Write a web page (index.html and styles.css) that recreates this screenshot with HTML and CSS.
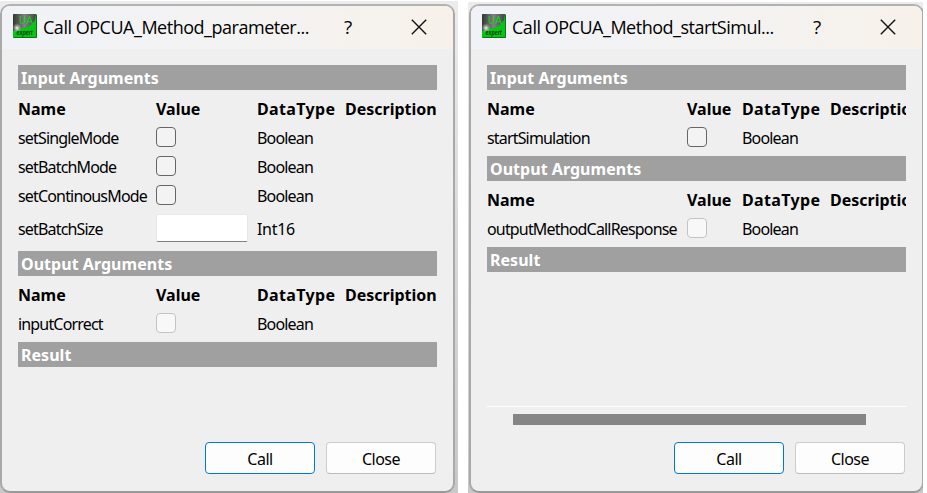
FILE: index.html
```html
<!DOCTYPE html>
<html lang="en">
<head>
<meta charset="utf-8">
<title>Call OPCUA Method</title>
<link rel="stylesheet" href="styles.css">
</head>
<body>
<svg width="0" height="0" class="defs">
  <defs>
    <linearGradient id="g" x1="0" y1="0" x2="1" y2="0"><stop offset="0" stop-color="#303830"/><stop offset=".5" stop-color="#808080"/><stop offset="1" stop-color="#454545"/></linearGradient>
    <radialGradient id="r"><stop offset="0" stop-color="#fff"/><stop offset="1" stop-color="#999" stop-opacity="0"/></radialGradient>
    <symbol id="logo" viewBox="0 0 24 24">
      <rect width="24" height="24" rx="1" fill="#08c414"/>
      <path d="M0 1Q0 0 1 0H23L22 6Q18 13 10 14L0 17Z" fill="url(#g)"/>
      <circle cx="4" cy="14" r="5" fill="url(#r)"/>
      <text x="6" y="10" class="logo-ua">UA</text>
      <text x="3.5" y="20.500" class="logo-ex" textLength="16" lengthAdjust="spacingAndGlyphs">expert</text>
      <path d="M.5 23.500H23.500V1" fill="none" stroke="#087a10"/>
    </symbol>
  </defs>
</svg>
<main class="stage">
  <div class="backdrop first">
    <section class="window">
      <header class="titlebar">
        <svg class="logo"><use href="#logo"/></svg>
        <h1>Call OPCUA_Method_parameter...</h1>
        <span class="help">?</span>
        <svg class="x" viewBox="0 0 16 16"><path d="M.8.8 15.200 15.200M15.200.8.8 15.200"/></svg>
      </header>
      <div class="content">
        <h2 class="bar">Input Arguments</h2>
        <div class="row head"><b>Name</b><b>Value</b><b class="type">DataType</b><b>Description</b></div>
        <div class="row"><span>setSingleMode</span><i class="check"></i><span>Boolean</span></div>
        <div class="row"><span>setBatchMode</span><i class="check"></i><span>Boolean</span></div>
        <div class="row"><span>setContinousMode</span><i class="check"></i><span>Boolean</span></div>
        <div class="row tall"><span>setBatchSize</span><i class="field"></i><span class="int">Int16</span></div>
        <h2 class="bar">Output Arguments</h2>
        <div class="row head"><b>Name</b><b>Value</b><b class="type">DataType</b><b>Description</b></div>
        <div class="row"><span>inputCorrect</span><i class="check off"></i><span>Boolean</span></div>
        <h2 class="bar">Result</h2>
      </div>
      <footer class="actions"><button class="btn primary">Call</button><button class="btn">Close</button></footer>
    </section>
  </div>
  <div class="backdrop second">
    <section class="window">
      <header class="titlebar">
        <svg class="logo"><use href="#logo"/></svg>
        <h1>Call OPCUA_Method_startSimul...</h1>
        <span class="help">?</span>
        <svg class="x" viewBox="0 0 16 16"><path d="M.8.8 15.200 15.200M15.200.8.8 15.200"/></svg>
      </header>
      <div class="content">
        <h2 class="bar">Input Arguments</h2>
        <div class="row head"><b>Name</b><b>Value</b><b class="type">DataType</b><b>Description</b></div>
        <div class="row"><span>startSimulation</span><i class="check"></i><span>Boolean</span></div>
        <h2 class="bar">Output Arguments</h2>
        <div class="row head"><b>Name</b><b>Value</b><b class="type">DataType</b><b>Description</b></div>
        <div class="row"><span>outputMethodCallResponse</span><i class="check off"></i><span>Boolean</span></div>
        <h2 class="bar">Result</h2>
        <div class="scroll"><div class="thumb"></div></div>
      </div>
      <footer class="actions"><button class="btn primary">Call</button><button class="btn">Close</button></footer>
    </section>
  </div>
</main>
</body>
</html>
```
FILE: styles.css
```css
* { box-sizing: border-box; }
body { margin: 0; background: #fff; color: #000; font: 16px/20px "Noto Sans", sans-serif; overflow: hidden; }
.defs { display: block; }
.stage { display: flex; gap: 10px; height: 493px; }
.backdrop { background: linear-gradient(#ececec, #e0e0e0 30%, #c8c8c8); overflow: hidden; }
.first { width: 458px; margin-top: 1px; padding-top: 3px; }
.second { width: 455px; margin-top: 2px; padding: 2px 0 0 1px; }
.window { width: 455px; height: 489px; border: 2px solid; border-color: #b2b2b2 #a9a9a9 #999 #a9a9a9; border-radius: 10px; background: #efefef; overflow: hidden; display: flex; flex-direction: column; }
.titlebar { height: 43px; flex: none; padding: 0 26px 0 11px; display: flex; align-items: center; background: linear-gradient(90deg, #f1f2f7, #f3f3f3 50%, #f7f1ea); }
.logo { width: 24px; height: 24px; margin-top: -3px; }
.logo-ua { font: 10px "Liberation Sans", sans-serif; fill: #10d020; }
.logo-ex { font: italic bold 7px "Liberation Sans", sans-serif; fill: #043c08; }
h1 { margin: -2px 0 0 6px; font: 18px/24px "Open Sans", sans-serif; white-space: nowrap; width: 267px; letter-spacing: -.48px; }
.help { width: 70px; padding-left: 34px; font: 19px/24px "Open Sans", sans-serif; margin-top: -2px; }
.x { width: 16px; height: 16px; margin: -2px 0 0 auto; fill: none; stroke: #111; stroke-width: 1.400; }
.content { flex: 1; width: 419px; margin: 16px 0 0 16px; overflow: hidden; display: flex; flex-direction: column; }
.bar { flex: none; margin: 0; height: 25px; padding: 1px 0 0 3px; background: #a0a0a0; color: #fff; font-size: 16px; font-weight: 700; line-height: 25px; letter-spacing: .03px; }
.row { flex: none; display: grid; grid-template-columns: 138px 101px 88px 110px; height: 29px; line-height: 22px; white-space: nowrap; letter-spacing: -.83px; }
.second .row { grid-template-columns: 200px 55px 88px 110px; }
.head, .second .head { height: 37px; line-height: 38px; letter-spacing: 0; }
.type { letter-spacing: .35px; }
.int { letter-spacing: -.3px; }
.tall { height: 37px; line-height: 30px; }
.check { width: 20px; height: 20px; border: 1px solid #666; border-radius: 4px; background: #f3f3f3; }
.off { border-color: #c3c3c3; background: #f8f8f8; }
.field { width: 92px; height: 28px; background: #fff; border: 1px solid #e8e8e8; border-bottom-color: #808080; border-radius: 2px; }
.scroll { flex: none; margin-top: auto; height: 20px; border-top: 1px solid #fff; padding: 7px 40px 0 26px; }
.thumb { height: 11px; background: #858585; }
.actions { flex: none; display: flex; justify-content: flex-end; gap: 11px; height: 65px; padding: 16px 17px 0 0; }
.btn { width: 110px; height: 32px; padding: 2px 0 0; border: 1px solid #ccc; border-bottom-color: #bbb; border-radius: 4px; background: #fdfdfd; font: inherit; color: #000; letter-spacing: -.5px; }
.primary { border-color: #0078d4; }
```
